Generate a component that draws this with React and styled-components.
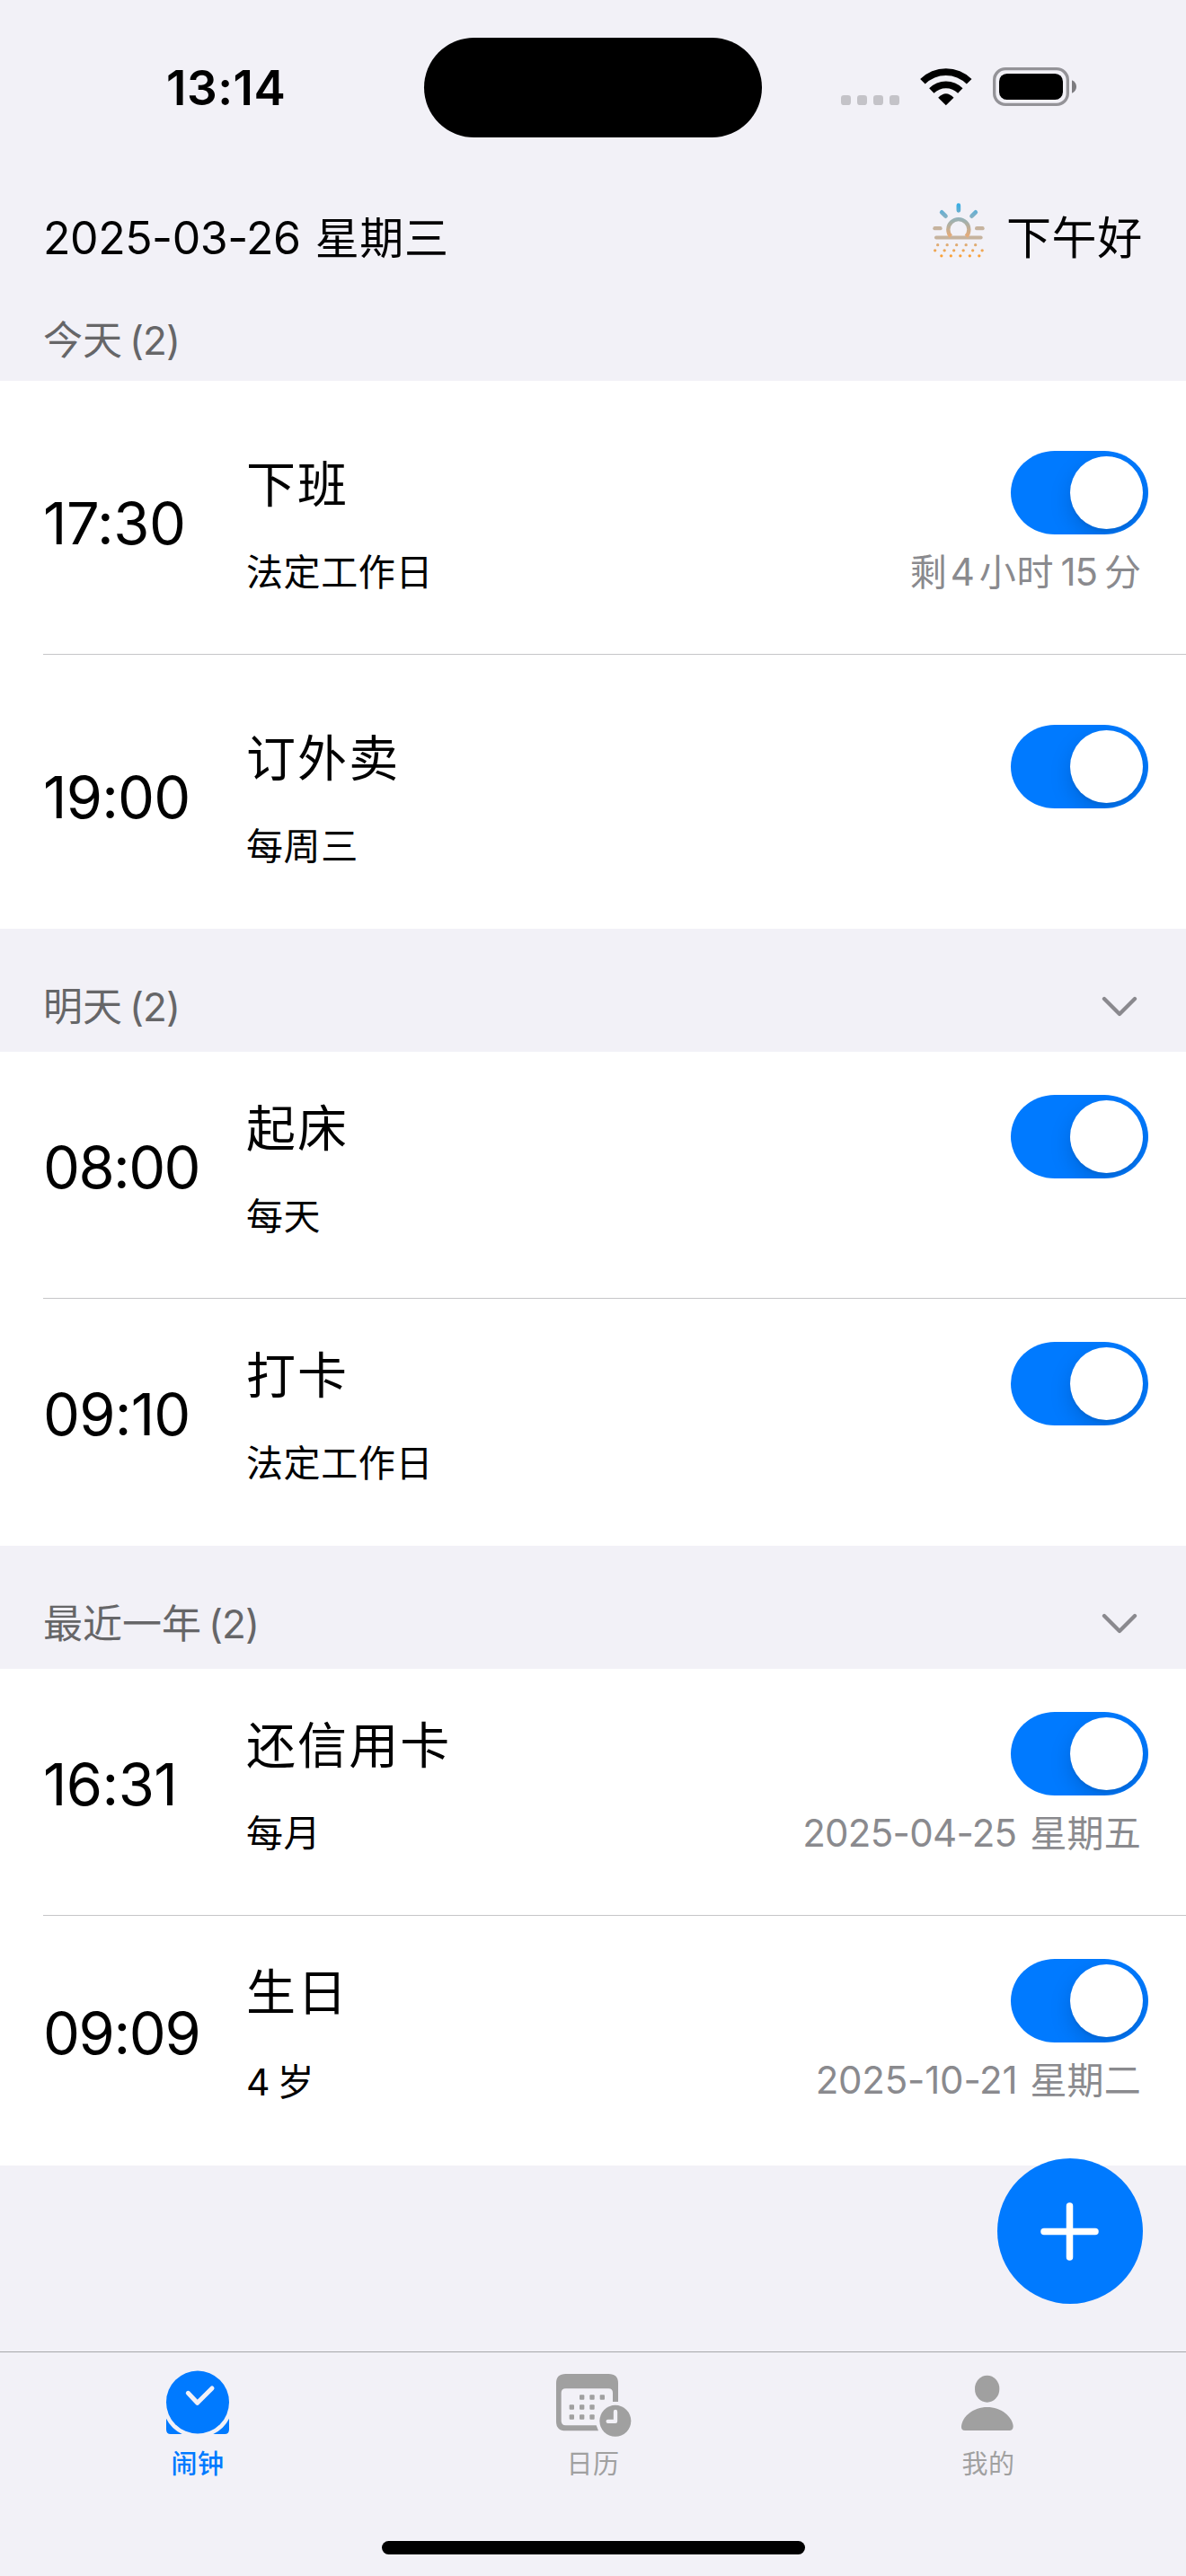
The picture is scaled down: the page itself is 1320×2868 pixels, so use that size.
import React, { useState } from 'react';
import styled, { createGlobalStyle } from 'styled-components';

const GlobalStyle = createGlobalStyle`
  body {
    margin: 0;
    background-color: #f2f1f7;
    font-family: Inter, "Noto Sans CJK SC", sans-serif;
  }
  * {
    box-sizing: border-box;
  }
`;

const Screen = styled.div`
  width: 1320px;
  height: 2868px;
  display: flex;
  flex-direction: column;
  position: relative;
  overflow: hidden;
  color: #000;
  background-color: #f2f1f7;
  white-space: nowrap;
`;

const StatusBar = styled.div`
  height: 194px;
  padding: 0 122px 0 185px;
  display: grid;
  grid-template-columns: 287px 376px 1fr;
  align-items: center;
`;

const Clock = styled.div`
  font-size: 53px;
  font-weight: 600;
  line-height: 64px;
  letter-spacing: 0.5px;
  margin-top: 2px;
`;

const Island = styled.div`
  height: 111px;
  border-radius: 56px;
  background-color: #000;
`;

const StatusIcons = styled.div`
  padding-bottom: 1px;
  display: flex;
  justify-content: flex-end;
  align-items: center;
  gap: 23px;
`;

const HeaderBar = styled.header`
  height: 142px;
  padding: 38px 48px 0 48px;
  display: flex;
  justify-content: space-between;
  font-size: 50px;
  line-height: 66px;
`;

const Greeting = styled.div`
  display: flex;
  gap: 24px;
`;

/* Latin and Chinese runs are tracked separately */
const Latin = styled.span`
  letter-spacing: ${(props) => props.$track || 0}px;
  margin-right: ${(props) => props.$after || 0}px;
`;

const Han = styled.span`
  font-size: ${(props) => props.$size}px;
  letter-spacing: ${(props) => props.$track || 0}px;
  margin-right: ${(props) => props.$after || 0}px;
`;

const SectionHeader = styled.div`
  height: ${(props) => props.$height}px;
  padding: 0 54px ${(props) => props.$bottom}px 48px;
  display: flex;
  justify-content: space-between;
  align-items: flex-end;
  font-size: 44px;
  line-height: 60px;
  color: #666668;
`;

const ChevronIcon = styled.svg`
  width: 40px;
  height: 24px;
  margin-bottom: 18px;
`;

const List = styled.div`
  background-color: #fff;
`;

const Row = styled.div`
  height: ${(props) => props.$height}px;
  margin-left: 48px;
  padding: ${(props) => props.$top}px 42px 0 0;
  display: grid;
  grid-template-columns: 226px 1fr auto;
  align-items: start;
  border-bottom: 1px solid #c6c6c8;

  &:last-child {
    border-bottom: none;
  }
`;

const Time = styled.div`
  margin-top: ${(props) => (props.$tall ? 43 : 41)}px;
  font-size: 65px;
  line-height: 80px;
  letter-spacing: ${(props) => props.$track}px;
`;

const Title = styled.div`
  font-size: 55px;
  line-height: 74px;
  letter-spacing: 2.1px;
`;

const Repeat = styled.div`
  margin-top: ${(props) => (props.$tall ? 33 : 31)}px;
  font-size: 41px;
  line-height: 60px;
  letter-spacing: 0.6px;
`;

const RowRight = styled.div`
  display: flex;
  flex-direction: column;
  align-items: flex-end;
`;

const Switch = styled.button`
  width: 153px;
  height: 93px;
  padding: 0 6px;
  border: none;
  border-radius: 49px / 46.5px;
  display: flex;
  align-items: center;
  justify-content: ${(props) => (props.$on ? 'flex-end' : 'flex-start')};
  background-color: ${(props) => (props.$on ? '#007aff' : '#e9e9eb')};
  overflow: hidden;
`;

const Knob = styled.span`
  width: 81px;
  height: 81px;
  border-radius: 50%;
  background-color: #fff;
  box-shadow: 0 9px 24px rgba(0, 0, 0, 0.15), 0 3px 3px rgba(0, 0, 0, 0.06);
`;

const Note = styled.div`
  margin: 12px 8px 0 0;
  font-size: 42px;
  line-height: 60px;
  color: #8a8a8e;
`;

const AddButton = styled.button`
  position: absolute;
  right: 48px;
  top: 2403px;
  width: 162px;
  height: 162px;
  padding: 0;
  border: none;
  border-radius: 50%;
  background-color: #007aff;

  svg {
    display: block;
  }
`;

const TabBar = styled.nav`
  height: 250px;
  margin-top: auto;
  padding-top: 20px;
  display: grid;
  grid-template-columns: repeat(3, 1fr);
  align-content: start;
  border-top: 1px solid #a7a7aa;
`;

const Tab = styled.div`
  display: flex;
  flex-direction: column;
  align-items: center;
  font-size: 29px;
  font-weight: ${(props) => (props.$active ? 500 : 400)};
  line-height: 40px;
  letter-spacing: 0.5px;
  color: ${(props) => (props.$active ? '#007aff' : '#a0a0a0')};

  svg {
    width: 90px;
    height: 74px;
    margin-bottom: 11px;
  }
`;

const HomeIndicator = styled.div`
  position: absolute;
  left: 425px;
  bottom: 24px;
  width: 471px;
  height: 15px;
  border-radius: 8px;
  background-color: #000;
`;

const SignalDots = () => (
    <svg width="65" height="43" viewBox="111 105 195 129">
        <g fill="#c4c3c8">
            <rect x="111" y="198" width="33" height="33" rx="10" />
            <rect x="165" y="198" width="33" height="33" rx="10" />
            <rect x="219" y="198" width="33" height="33" rx="10" />
            <rect x="273" y="198" width="33" height="33" rx="10" />
        </g>
    </svg>
);

const WifiIcon = () => (
    <svg width="58" height="43" viewBox="374 105 174 129">
        <path d="M460.500 231.500 L434.500 206 Q460.500 179 486.500 206 Z" />
        <path d="M404.500 175 A78.500 78.500 0 0 1 516.500 175 L500.500 191.500 A56 56 0 0 0 420.500 191.500 Z" />
        <path d="M374.500 144 A122 122 0 0 1 546.500 144 L529.500 160.500 A98 98 0 0 0 391 160.500 Z" />
    </svg>
);

const BatteryIcon = () => (
    <svg width="93" height="43" viewBox="615 105 279 129">
        <rect x="620" y="110" width="245" height="119" rx="37" fill="none" stroke="#949398" strokeWidth="10" />
        <rect x="636" y="126" width="213" height="87" rx="26" />
        <path d="M879 148 C899 155 899 184 879 191 Z" fill="#7d7c80" />
    </svg>
);

// x offsets of the haze dots below the horizon, one list per line
const hazeDots = [
    { y: 700, xs: [436, 467.5, 499, 530.5, 562] },
    { y: 718.5, xs: [427, 458.5, 490, 521.5, 553, 584.5] },
    { y: 736.5, xs: [448.5, 480, 511.5, 543, 574.5] },
];

const SunIcon = styled.svg`
  width: 58px;
  height: 61px;
  margin-top: -6px;
`;

const SunHazeIcon = () => (
    <SunIcon viewBox="419 560 174 183">
        <defs>
            <linearGradient id="haze" gradientUnits="userSpaceOnUse" x1="0" y1="561" x2="0" y2="742">
                <stop offset="0" stopColor="#32ade6" />
                <stop offset="0.2" stopColor="#75b0cc" />
                <stop offset="0.47" stopColor="#c2b4a2" />
                <stop offset="0.65" stopColor="#cfb296" />
                <stop offset="1" stopColor="#ff9f2e" />
            </linearGradient>
            <linearGradient id="sun" gradientUnits="userSpaceOnUse" x1="0" y1="606" x2="0" y2="676">
                <stop offset="0" stopColor="#8cb2be" />
                <stop offset="1" stopColor="#eeab72" />
            </linearGradient>
        </defs>
        <g stroke="url(#haze)" strokeWidth="14" strokeLinecap="round" fill="none">
            <path d="M505.500 568 L505.600 585" />
            <path d="M449.500 591 L462.500 604" />
            <path d="M562.500 591 L549.500 604" />
        </g>
        <g fill="#c6b39e">
            <rect x="420" y="638" width="31" height="13" rx="6.500" />
            <rect x="560" y="638" width="32" height="13" rx="6.500" />
            <rect x="425" y="669.500" width="161" height="12" rx="6" />
        </g>
        <path d="M480 672 A34.500 34.500 0 1 1 531 672" fill="none" stroke="url(#sun)" strokeWidth="13" />
        <g fill="url(#haze)">
            {hazeDots.map((line) => line.xs.map((x) => <circle key={x} cx={x} cy={line.y} r="5" />))}
        </g>
    </SunIcon>
);

const Chevron = () => (
    <ChevronIcon viewBox="0 0 40 24">
        <path d="M3 3 L20 20 L37 3" fill="none" stroke="#8a898e" strokeWidth="4.300" strokeLinecap="round" strokeLinejoin="round" />
    </ChevronIcon>
);

const AlarmTabIcon = () => (
    <svg viewBox="165 117 270 222">
        <circle cx="300" cy="223.500" r="105" fill="#007aff" />
        <path d="M195 278 Q211 311 248 330 L210 330 Q195 330 195 314 Z" fill="#007aff" />
        <path d="M405 278 Q389 311 352 330 L390 330 Q405 330 405 314 Z" fill="#007aff" />
        <path d="M268 193 L299 226 L348 177" fill="none" stroke="#f2f1f7" strokeWidth="15" strokeLinecap="round" strokeLinejoin="round" />
    </svg>
);

const calendarDots = [
    [263, 207], [297, 207], [331, 207],
    [229, 240], [263, 240], [297, 240],
    [229, 273], [263, 273], [297, 273],
];

const CalendarTabIcon = () => (
    <svg viewBox="165 117 270 222">
        <path
            fillRule="evenodd"
            fill="#a0a0a0"
            d="M209 129 H352 Q384 129 384 160 V222 H366 V192 Q366 178 352 178 H209 Q194 178 194 192 V286 Q194 301 209 301 H311 L318 319 H209 Q177 319 177 288 V160 Q177 129 209 129 Z"
        />
        {calendarDots.map(([x, y]) => (
            <rect key={`${x}-${y}`} x={x - 8} y={y - 8} width="16" height="16" rx="3" fill="#a0a0a0" />
        ))}
        <circle cx="374.500" cy="286" r="52.500" fill="#a0a0a0" />
        <path d="M375 255 V287.500 H350" fill="none" stroke="#f2f1f7" strokeWidth="13" strokeLinecap="round" strokeLinejoin="round" />
    </svg>
);

const ProfileTabIcon = () => (
    <svg viewBox="165 117 270 222">
        <ellipse cx="296" cy="179" rx="41" ry="45" fill="#a0a0a0" />
        <path d="M222 318 C213 318 209 313 210 303 C214 270 250 240 296 240 C343 240 379 271 383 303 C383 313 379 318 370 318 Z" fill="#a0a0a0" />
    </svg>
);

const DateText = ({ date, day, latinTrack, latinAfter, hanSize, hanTrack }) => (
    <>
        <Latin $track={latinTrack} $after={latinAfter}>{date}</Latin>
        <Han $size={hanSize} $track={hanTrack}>{day}</Han>
    </>
);

const sections = [
    {
        name: '今天', count: 2, headerHeight: 88, headerBottom: 15, rowTop: 78,
        alarms: [
            {
                time: '17:30', track: -0.5, title: '下班', repeat: '法定工作日', height: 305,
                note: (
                    <>
                        <Han $size={41} $after={4}>剩</Han>
                        <Latin $track={-1} $after={6}>4</Latin>
                        <Han $size={41} $track={0.8} $after={7}>小时</Han>
                        <Latin $track={-1} $after={8}>15</Latin>
                        <Han $size={41}>分</Han>
                    </>
                ),
            },
            { time: '19:00', track: -0.8, title: '订外卖', repeat: '每周三', height: 305 },
        ],
    },
    {
        name: '明天', count: 2, headerHeight: 137, headerBottom: 20, rowTop: 48, foldable: true,
        alarms: [
            { time: '08:00', track: -1.6, title: '起床', repeat: '每天', height: 275 },
            { time: '09:10', track: -0.8, title: '打卡', repeat: '法定工作日', height: 275 },
        ],
    },
    {
        name: '最近一年', count: 2, headerHeight: 137, headerBottom: 20, rowTop: 48, foldable: true,
        alarms: [
            {
                time: '16:31', track: -0.6, title: '还信用卡', repeat: '每月', height: 275,
                note: <DateText date="2025-04-25" day="星期五" latinTrack={-0.7} latinAfter={15} hanSize={41} hanTrack={0.2} />,
            },
            {
                time: '09:09', track: -1.4, title: '生日', repeat: <><Latin $after={8}>4</Latin>岁</>, height: 278, tall: true,
                note: <DateText date="2025-10-21" day="星期二" latinTrack={-0.2} latinAfter={14} hanSize={41} hanTrack={0.2} />,
            },
        ],
    },
];

function AlarmRow({ alarm, top }) {
    const [on, setOn] = useState(true);

    return (
        <Row $height={alarm.height} $top={top}>
            <Time $track={alarm.track} $tall={alarm.tall}>{alarm.time}</Time>
            <div>
                <Title>{alarm.title}</Title>
                <Repeat $tall={alarm.tall}>{alarm.repeat}</Repeat>
            </div>
            <RowRight>
                <Switch $on={on} onClick={() => setOn(!on)}>
                    <Knob />
                </Switch>
                {alarm.note && <Note>{alarm.note}</Note>}
            </RowRight>
        </Row>
    );
}

function App() {
    return (
        <>
            <GlobalStyle />
            <Screen>
                <StatusBar>
                    <Clock>13:14</Clock>
                    <Island />
                    <StatusIcons>
                        <SignalDots />
                        <WifiIcon />
                        <BatteryIcon />
                    </StatusIcons>
                </StatusBar>

                <HeaderBar>
                    <div>
                        <DateText date="2025-03-26" day="星期三" latinTrack={-0.45} latinAfter={16} hanSize={49} hanTrack={0.7} />
                    </div>
                    <Greeting>
                        <SunHazeIcon />
                        <Han $size={50} $track={0.7}>下午好</Han>
                    </Greeting>
                </HeaderBar>

                {sections.map((section) => (
                    <section key={section.name}>
                        <SectionHeader $height={section.headerHeight} $bottom={section.headerBottom}>
                            <div>
                                <Han $size={44} $after={8}>{section.name}</Han>
                                <Latin $track={-1}>({section.count})</Latin>
                            </div>
                            {section.foldable && <Chevron />}
                        </SectionHeader>
                        <List>
                            {section.alarms.map((alarm) => (
                                <AlarmRow key={alarm.time} alarm={alarm} top={section.rowTop} />
                            ))}
                        </List>
                    </section>
                ))}

                <AddButton>
                    <svg width="162" height="162" viewBox="0 0 162 162">
                        <path d="M52 81.500 H109 M80.500 53 V110" stroke="#fff" strokeWidth="7.500" strokeLinecap="round" />
                    </svg>
                </AddButton>

                <TabBar>
                    <Tab $active>
                        <AlarmTabIcon />
                        闹钟
                    </Tab>
                    <Tab>
                        <CalendarTabIcon />
                        日历
                    </Tab>
                    <Tab>
                        <ProfileTabIcon />
                        我的
                    </Tab>
                </TabBar>
                <HomeIndicator />
            </Screen>
        </>
    );
}

export default App;
